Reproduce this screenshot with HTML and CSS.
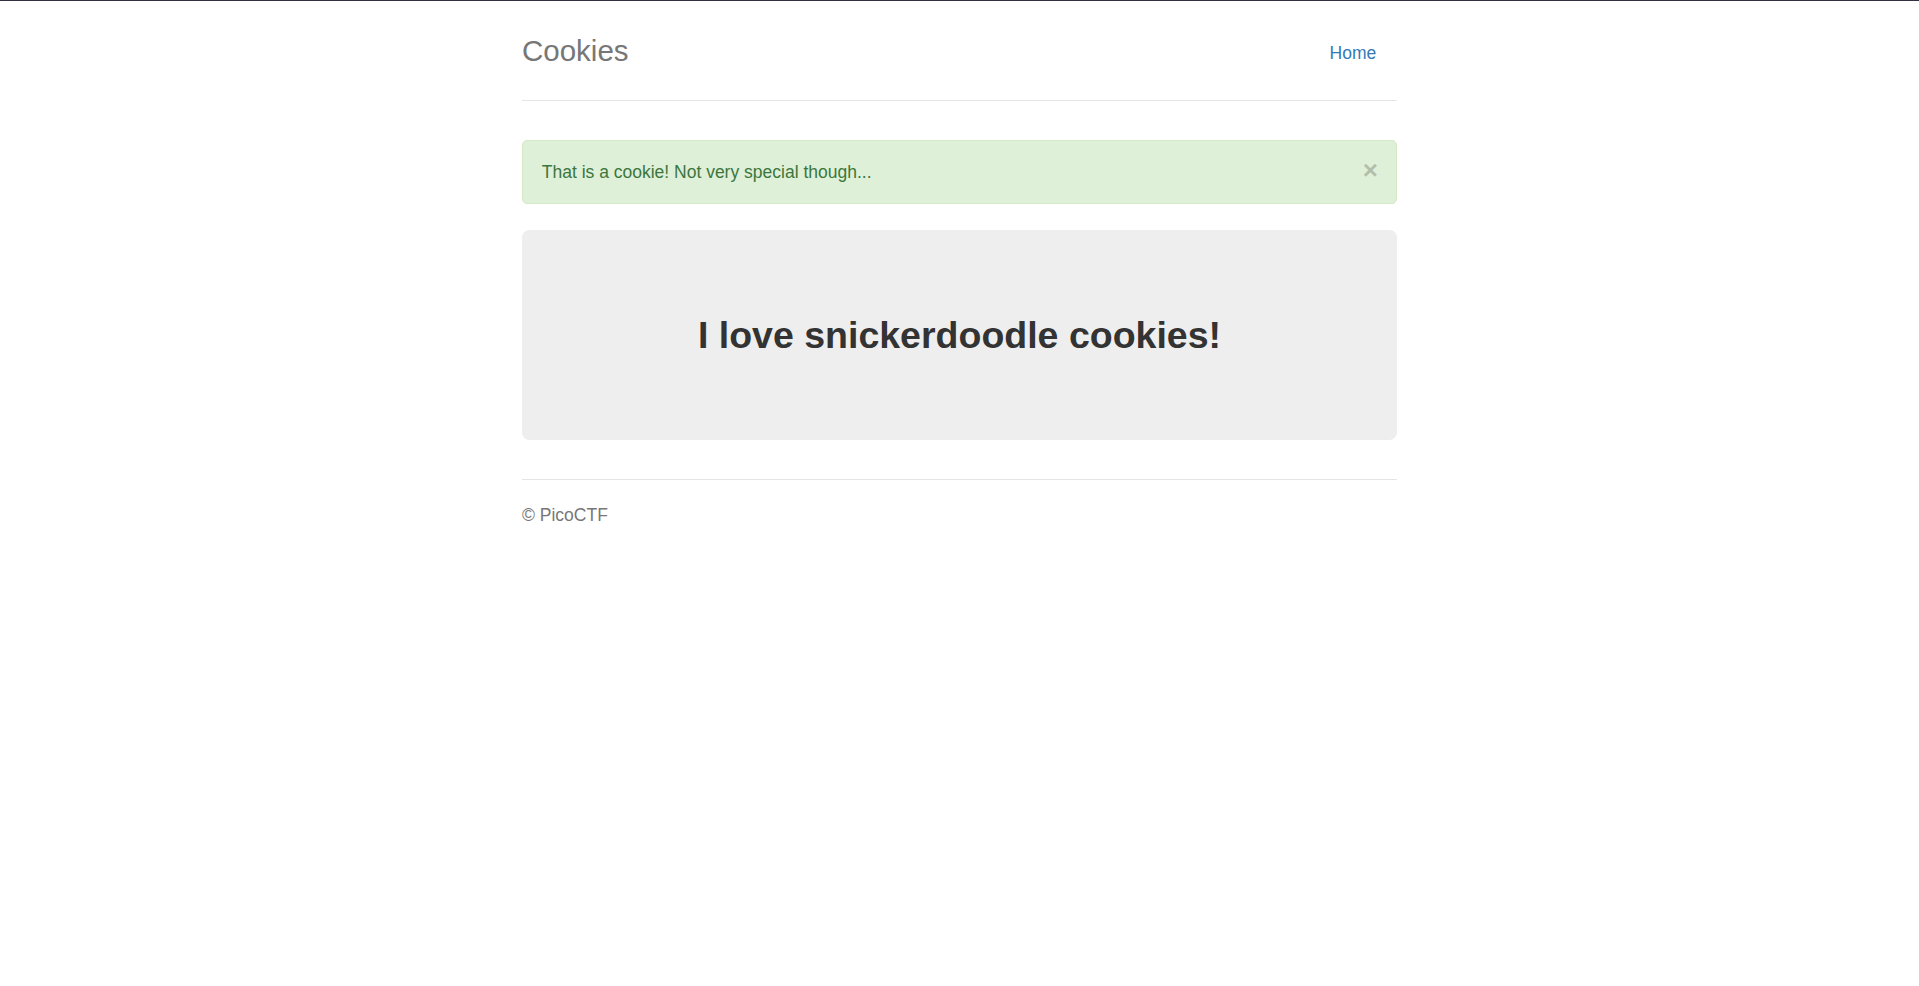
FILE: index.html
```html
<!DOCTYPE html>
<html lang="en">
<head>
<meta charset="utf-8">
<title>Cookies</title>
<link rel="stylesheet" href="styles.css">
</head>
<body class="page">
<div class="topline"></div>
<div class="container">
  <div class="header">
    <h3 class="brand">Cookies</h3>
    <ul class="nav">
      <li><a class="nav-link" href="#">Home</a></li>
    </ul>
  </div>

  <div class="alert">
    <span class="alert-text">That is a cookie! Not very special though...</span>
    <button class="close" type="button" aria-label="Close">×</button>
  </div>

  <div class="jumbotron">
    <h1 class="jumbo-title">I love snickerdoodle cookies!</h1>
  </div>

  <footer class="footer">
    <p class="footer-text">© PicoCTF</p>
  </footer>
</div>
</body>
</html>
```
FILE: styles.css
```css
html, body {
  margin: 0;
  padding: 0;
  background: #fff;
}

.page {
  font-family: "Liberation Sans", Arial, Helvetica, sans-serif;
  font-size: 17.5px;
  line-height: 25px;
  color: #333;
}

.topline {
  height: 1px;
  background: #34303f;
}

.container {
  width: 875px;
  margin: 0 auto;
}

.header {
  display: flex;
  justify-content: space-between;
  align-items: flex-start;
  height: 74.5px;
  padding-top: 24.5px;
  padding-bottom: 0;
  border-bottom: 1px solid #e5e5e5;
}

.brand {
  margin: 0;
  font-size: 29.5px;
  font-weight: 400;
  line-height: 50px;
  color: #777;
}

.nav {
  list-style: none;
  margin: 2.6px 2px 0 0;
  padding: 0;
  display: flex;
}

.nav-link {
  display: block;
  padding: 12.5px 18.75px;
  font-size: 17.5px;
  line-height: 25px;
  color: #337ab7;
  text-decoration: none;
}

.alert {
  margin-top: 39px;
  display: flex;
  justify-content: space-between;
  align-items: center;
  padding: 18px 18px 18px 18.75px;
  background: #dff0d8;
  border: 1px solid #d6e9c6;
  border-radius: 5px;
  color: #3c763d;
  font-size: 17.5px;
  line-height: 25px;
}

.close {
  padding: 0;
  margin: 0;
  border: 0;
  background: transparent;
  font-family: "Liberation Sans", Arial, sans-serif;
  font-size: 26px;
  font-weight: 700;
  line-height: 1;
  color: #000;
  opacity: 0.2;
  position: relative;
  top: -2px;
  cursor: pointer;
}

.jumbotron {
  margin-top: 26px;
  padding: 84.5px 0;
  background: #eee;
  border-radius: 7.5px;
  text-align: center;
}

.jumbo-title {
  margin: 0;
  font-size: 37.5px;
  font-weight: 700;
  line-height: 1.1;
  color: #333;
}

.footer {
  margin-top: 39px;
  padding-top: 22.5px;
  border-top: 1px solid #e5e5e5;
  color: #777;
}

.footer-text {
  margin: 0;
  font-size: 17.5px;
  line-height: 25px;
}
```
